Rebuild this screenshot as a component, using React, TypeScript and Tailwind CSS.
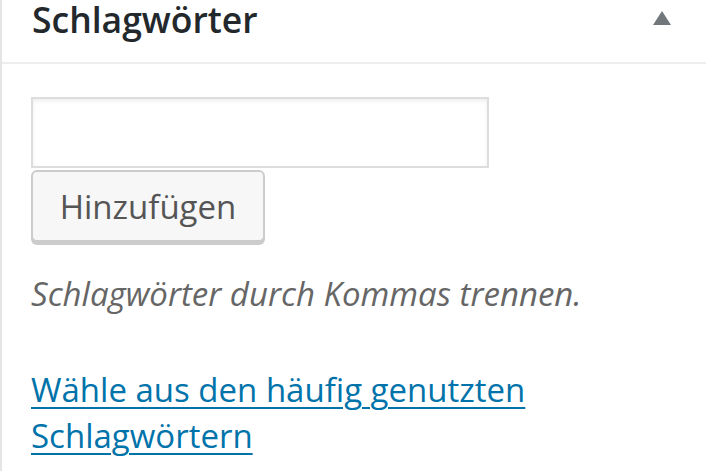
export default function App() {
  return (
    <div
      className="h-[471px] w-[706px] overflow-hidden bg-white"
      style={{ fontFamily: '"Open Sans", sans-serif' }}
    >
      <div className="h-full border-l-2 border-[#e5e5e5]">
        {/* Header */}
        <div className="flex h-[64px] items-start justify-between border-b-2 border-[#eeeeee] pl-[30px] pr-[34px]">
          <h2 className="whitespace-nowrap text-[35.5px] font-semibold leading-[38px] text-[#23282d]">
            Schlagwörter
          </h2>
          <svg
            viewBox="0 0 20 16"
            className="mt-[10px] h-[16px] w-[20px]"
            fill="#72777c"
          >
            <path d="M10 1 L19 15 L1 15 Z" />
          </svg>
        </div>

        {/* Body */}
        <div className="pl-[29px] pt-[33px]">
          <input
            type="text"
            className="block h-[71px] w-[458px] border-2 border-[#dddddd] bg-white shadow-[inset_0_2px_4px_rgba(0,0,0,0.07)] outline-none"
          />
          <button className="mt-[2px] block h-[72px] w-[234px] rounded-[6px] border-2 border-[#cccccc] bg-[#f7f7f7] text-[33px] leading-none text-[#555555] shadow-[0_3px_0_#cccccc]">
            Hinzufügen
          </button>
          <p className="mt-[30px] whitespace-nowrap text-[33px] italic leading-[44px] text-[#666666]">
            Schlagwörter durch Kommas trennen.
          </p>
          <p className="mt-[51px] whitespace-nowrap text-[33px] leading-[46px]">
            <a href="#" className="text-[#0073aa] underline decoration-2 underline-offset-[5px]">
              Wähle aus den häufig genutzten
              <br />
              Schlagwörtern
            </a>
          </p>
        </div>
      </div>
    </div>
  )
}
